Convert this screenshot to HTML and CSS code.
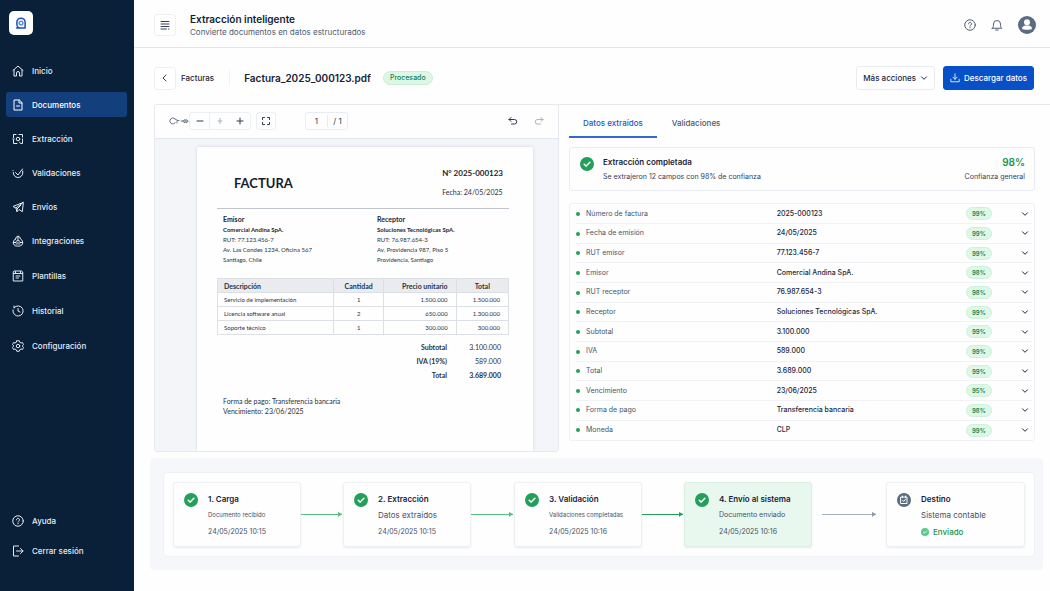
FILE: index.html
```html
<!DOCTYPE html>
<html lang="es">
<head>
<meta charset="utf-8">
<meta name="viewport" content="width=device-width, initial-scale=1">
<title>Extracción inteligente</title>
<link rel="stylesheet" href="styles.css">
</head>
<body>
<svg class="sprite" aria-hidden="true">
  <symbol id="chevron" viewBox="0 0 8 8"><path d="M1.5 2.8 4 5.3l2.5-2.5"/></symbol>
  <symbol id="help" viewBox="0 0 24 24"><circle cx="12" cy="12" r="10.5"/><path d="M9 9.6a3 3 0 1 1 4.6 2.5c-1 .7-1.6 1.1-1.6 2.2M12 17v.6"/></symbol>
  <symbol id="done" viewBox="0 0 14 14"><circle cx="7" cy="7" r="7"/><path d="m4.2 7.2 2 1.9 3.7-3.9"/></symbol>
</svg>
<div class="app">
  <aside class="sidebar">
    <a class="logo" href="#" aria-label="Inicio">
      <svg viewBox="0 0 24 24"><path class="logo-ring" d="M6 18.500h11.500V11a5.500 5.500 0 0 0-11 0v3a4.500 4.500 0 0 0 4.500 4.500"/><circle class="logo-dot" cx="12" cy="12" r="2.500"/></svg>
    </a>
    <nav class="nav" aria-label="Principal">
      <a class="nav-item" href="#"><svg class="icon" viewBox="0 0 24 24"><path d="M2 11 12 2l10 9M4 9.500V22h5v-6a3 3 0 0 1 6 0v6h5V9.500"/></svg>Inicio</a>
      <a class="nav-item active" href="#" aria-current="page"><svg class="icon" viewBox="0 0 24 24"><path d="M14 2H4v20h16V8zM14 2v6h6M9 14h6"/></svg>Documentos</a>
      <a class="nav-item" href="#"><svg class="icon" viewBox="0 0 24 24"><path d="M3 9V3h5M14 3h7v5M3 14v7h7M1.500 12h3M21 12v3M15 18l2 3h4v-4"/><circle cx="12" cy="12" r="3.500"/></svg>Extracción</a>
      <a class="nav-item" href="#"><svg class="icon" viewBox="0 0 24 24"><path d="M2.500 11a9.500 9.500 0 0 0 19 1V8M7 11l5 5L21 4M2 7v.5"/></svg>Validaciones</a>
      <a class="nav-item" href="#"><svg class="icon" viewBox="0 0 24 24"><path d="M22 3 2 11l6 3 2 7 4-4 6 4zM22 3 8 14M10 21v-5l8-8"/></svg>Envíos</a>
    </nav>
    <nav class="nav nav-tools" aria-label="Herramientas">
      <a class="nav-item" href="#"><svg class="icon" viewBox="0 0 24 24"><path d="M7 8a5 5 0 0 1 10 0 8 8 0 0 1 4.500 7c0 4-3 7-6.500 7H9c-3.500 0-6.500-3-6.500-7A8 8 0 0 1 7 8zM12 2v7M8 13l4-3 4 3M3 15h5M16 15h5M12 14v3M8 18h2M14 18h2"/></svg>Integraciones</a>
      <a class="nav-item" href="#"><svg class="icon" viewBox="0 0 24 24"><path d="M5 2h14l2.500 2v18h-19V4zM3 7h4M17 7h4M7 3v4h10V3M8 12h8M8 16h5"/></svg>Plantillas</a>
      <a class="nav-item" href="#"><svg class="icon" viewBox="0 0 24 24"><path d="M4.500 5a10.200 10.200 0 1 1-2.500 5M4 2v4M12 7v5l4 2"/></svg>Historial</a>
      <a class="nav-item" href="#"><svg class="icon" viewBox="0 0 24 24"><path d="M9.500 1.500h5l1 3 2.500 1.500 3-.8 2 4-2 2.300v1l2 2.300-2 4-3-.8-2.500 1.500-1 3h-5l-1-3L6 18l-3 .8-2-4 2-2.300v-1L1 9.200l2-4 3 .8 2.500-1.500z"/><circle cx="12" cy="12" r="3.500"/></svg>Configuración</a>
    </nav>
    <nav class="nav nav-foot" aria-label="Cuenta">
      <a class="nav-item" href="#"><svg class="icon"><use href="#help"/></svg>Ayuda</a>
      <a class="nav-item" href="#"><svg class="icon" viewBox="0 0 24 24"><path d="M13 2H3v20h10M9 12h13M17 7l5 5-5 5"/></svg>Cerrar sesión</a>
    </nav>
  </aside>

  <div class="main">
    <header class="topbar">
      <button class="square" aria-label="Menú"><svg class="icon" viewBox="0 0 24 24"><path d="M4 5h16M4 10h16M4 15h16M4 20h11M19 20h1"/></svg></button>
      <div class="titles">
        <h1>Extracción inteligente</h1>
        <p>Convierte documentos en datos estructurados</p>
      </div>
      <div class="top-actions">
        <button class="plain" aria-label="Ayuda"><svg class="icon"><use href="#help"/></svg></button>
        <button class="plain" aria-label="Notificaciones"><svg class="icon" viewBox="0 0 24 24"><path d="M2.500 18.500h19C19 16 19 14 19 10a7 7 0 0 0-14 0c0 4 0 6-2.500 8.500zM9.500 22h5"/></svg></button>
        <button class="plain" aria-label="Perfil"><svg class="avatar" viewBox="0 0 18 18"><circle class="avatar-bg" cx="9" cy="9" r="9"/><circle cx="9" cy="6.300" r="3"/><path d="M4 13c0-2.300 1.500-3.500 3.500-3.500h3c2 0 3.500 1.200 3.500 3.500-1.500 1-8.500 1-10 0z"/></svg></button>
      </div>
    </header>

    <div class="docbar">
      <button class="square back" aria-label="Volver"><svg class="icon" viewBox="0 0 24 24"><path d="m14 6-6 6 6 6"/></svg></button>
      <a class="crumb" href="#">Facturas</a>
      <h2>Factura_2025_000123.pdf</h2>
      <span class="status">Procesado</span>
      <div class="doc-actions">
        <button class="btn">Más acciones <svg class="chev"><use href="#chevron"/></svg></button>
        <button class="btn primary"><svg class="icon" viewBox="0 0 24 24"><path d="M12 2v13M7 10l5 5 5-5M2 15v6h20v-6"/></svg>Descargar datos</button>
      </div>
    </div>

    <div class="workspace">
      <section class="viewer" aria-label="Vista previa">
        <div class="tools">
          <svg class="zoom-mark" viewBox="0 0 20 8"><path d="M6 1.800a3 3 0 1 0 .2 4M6 2l2 1M8 6V3.500h2M12 4h2M14 4l2-1.500v3zM19 4l-2-1.500v3z"/></svg>
          <div class="tool-group">
            <button class="tool" aria-label="Alejar"><svg class="icon" viewBox="0 0 12 12"><path d="M3 6h6"/></svg></button>
            <button class="tool faint" aria-label="Tamaño real"><svg class="icon" viewBox="0 0 12 12"><path d="M4 6h4M6 3.500v5"/></svg></button>
            <button class="tool" aria-label="Acercar"><svg class="icon" viewBox="0 0 12 12"><path d="M3 6h6M6 3v6"/></svg></button>
          </div>
          <div class="tool-group"><button class="tool" aria-label="Pantalla completa"><svg class="icon" viewBox="0 0 12 12"><path d="M2.500 4.500v-2h2M7.500 2.500h2v2M9.500 7.500v2h-2M4.500 9.500h-2v-2"/></svg></button></div>
          <label class="pager"><input type="text" value="1" aria-label="Página"><span>/ 1</span></label>
          <div class="history">
            <button class="plain" aria-label="Deshacer"><svg class="icon" viewBox="0 0 12 12"><path d="M4 2.500 2 4.500l2 2M2 4.500h5.500a2.200 2.200 0 0 1 0 4.500H4.500"/></svg></button>
            <button class="plain faint" aria-label="Rehacer"><svg class="icon" viewBox="0 0 12 12"><path d="m8 2.500 2 2-2 2M10 4.500H4.500a2.200 2.200 0 0 0 0 4.500h3"/></svg></button>
          </div>
        </div>
        <div class="canvas">
          <article class="paper">
            <header class="inv-head">
              <h3>FACTURA</h3>
              <div><strong>N° 2025-000123</strong><span>Fecha: 24/05/2025</span></div>
            </header>
            <div class="parties">
              <p><strong>Emisor</strong><br><b>Comercial Andina SpA.</b><br>RUT: 77.123.456-7<br>Av. Las Condes 1234, Oficina 567<br>Santiago, Chile</p>
              <p><strong>Receptor</strong><br><b>Soluciones Tecnológicas SpA.</b><br>RUT: 76.987.654-3<br>Av. Providencia 987, Piso 5<br>Providencia, Santiago</p>
            </div>
            <table class="lines">
              <colgroup><col class="c-desc"><col class="c-qty"><col class="c-price"><col class="c-total"></colgroup>
              <thead><tr><th>Descripción</th><th>Cantidad</th><th>Precio unitario</th><th>Total</th></tr></thead>
              <tbody>
                <tr><td>Servicio de implementación</td><td>1</td><td>1.500.000</td><td>1.500.000</td></tr>
                <tr><td>Licencia software anual</td><td>2</td><td>650.000</td><td>1.300.000</td></tr>
                <tr><td>Soporte técnico</td><td>1</td><td>300.000</td><td>300.000</td></tr>
              </tbody>
            </table>
            <dl class="totals">
              <dt>Subtotal</dt><dd>3.100.000</dd>
              <dt>IVA (19%)</dt><dd>589.000</dd>
              <dt>Total</dt><dd class="grand">3.689.000</dd>
            </dl>
            <p class="terms">Forma de pago: Transferencia bancaria<br>Vencimiento: 23/06/2025</p>
          </article>
        </div>
      </section>

      <section class="data" aria-label="Datos">
        <div class="tabs" role="tablist">
          <button class="tab selected" role="tab" aria-selected="true">Datos extraídos</button>
          <button class="tab" role="tab" aria-selected="false">Validaciones</button>
        </div>
        <div class="summary">
          <svg class="done"><use href="#done"/></svg>
          <div class="summary-text"><h3>Extracción completada</h3><p>Se extrajeron 12 campos con 98% de confianza</p></div>
          <div class="score"><strong>98%</strong><span>Confianza general</span></div>
        </div>
        <div class="fields">
          <table>
            <tbody>
              <tr><th scope="row">Número de factura</th><td>2025-000123</td><td class="conf"><span>99%</span></td><td class="more"><button class="plain" aria-label="Ver Número de factura"><svg class="chev"><use href="#chevron"/></svg></button></td></tr>
              <tr><th scope="row">Fecha de emisión</th><td>24/05/2025</td><td class="conf"><span>99%</span></td><td class="more"><button class="plain" aria-label="Ver Fecha de emisión"><svg class="chev"><use href="#chevron"/></svg></button></td></tr>
              <tr><th scope="row">RUT emisor</th><td>77.123.456-7</td><td class="conf"><span>99%</span></td><td class="more"><button class="plain" aria-label="Ver RUT emisor"><svg class="chev"><use href="#chevron"/></svg></button></td></tr>
              <tr><th scope="row">Emisor</th><td>Comercial Andina SpA.</td><td class="conf"><span>98%</span></td><td class="more"><button class="plain" aria-label="Ver Emisor"><svg class="chev"><use href="#chevron"/></svg></button></td></tr>
              <tr><th scope="row">RUT receptor</th><td>76.987.654-3</td><td class="conf"><span>98%</span></td><td class="more"><button class="plain" aria-label="Ver RUT receptor"><svg class="chev"><use href="#chevron"/></svg></button></td></tr>
              <tr><th scope="row">Receptor</th><td>Soluciones Tecnológicas SpA.</td><td class="conf"><span>99%</span></td><td class="more"><button class="plain" aria-label="Ver Receptor"><svg class="chev"><use href="#chevron"/></svg></button></td></tr>
              <tr><th scope="row">Subtotal</th><td>3.100.000</td><td class="conf"><span>99%</span></td><td class="more"><button class="plain" aria-label="Ver Subtotal"><svg class="chev"><use href="#chevron"/></svg></button></td></tr>
              <tr><th scope="row">IVA</th><td>589.000</td><td class="conf"><span>99%</span></td><td class="more"><button class="plain" aria-label="Ver IVA"><svg class="chev"><use href="#chevron"/></svg></button></td></tr>
              <tr><th scope="row">Total</th><td>3.689.000</td><td class="conf"><span>99%</span></td><td class="more"><button class="plain" aria-label="Ver Total"><svg class="chev"><use href="#chevron"/></svg></button></td></tr>
              <tr><th scope="row">Vencimiento</th><td>23/06/2025</td><td class="conf"><span>95%</span></td><td class="more"><button class="plain" aria-label="Ver Vencimiento"><svg class="chev"><use href="#chevron"/></svg></button></td></tr>
              <tr><th scope="row">Forma de pago</th><td>Transferencia bancaria</td><td class="conf"><span>98%</span></td><td class="more"><button class="plain" aria-label="Ver Forma de pago"><svg class="chev"><use href="#chevron"/></svg></button></td></tr>
              <tr><th scope="row">Moneda</th><td>CLP</td><td class="conf"><span>99%</span></td><td class="more"><button class="plain" aria-label="Ver Moneda"><svg class="chev"><use href="#chevron"/></svg></button></td></tr>
            </tbody>
          </table>
        </div>
      </section>
    </div>

    <section class="flow" aria-label="Progreso">
      <div class="steps">
        <div class="step"><svg class="done"><use href="#done"/></svg><div><h3>1. Carga</h3><p class="small">Documento recibido</p><time>24/05/2025 10:15</time></div></div>
        <div class="arrow"></div>
        <div class="step"><svg class="done"><use href="#done"/></svg><div><h3>2. Extracción</h3><p>Datos extraídos</p><time>24/05/2025 10:15</time></div></div>
        <div class="arrow"></div>
        <div class="step"><svg class="done"><use href="#done"/></svg><div><h3>3. Validación</h3><p class="small">Validaciones completadas</p><time>24/05/2025 10:16</time></div></div>
        <div class="arrow strong"></div>
        <div class="step current"><svg class="done"><use href="#done"/></svg><div><h3>4. Envío al sistema</h3><p class="medium">Documento enviado</p><time>24/05/2025 10:16</time></div></div>
        <div class="arrow muted"></div>
        <div class="step"><svg class="target" viewBox="0 0 14 14"><circle cx="7" cy="7" r="7"/><path d="M4 4h6v6.500H4zM5.500 3v1.500M8.500 3v1.500M5.500 7.200l1.200 1.300 2-2.500"/></svg><div><h3>Destino</h3><p>Sistema contable</p><span class="sent"><svg class="done"><use href="#done"/></svg>Enviado</span></div></div>
      </div>
    </section>
  </div>
</div>
</body>
</html>
```
FILE: styles.css
```css
* { box-sizing: border-box; }
body {
  margin: 0;
  font-family: Inter, "Liberation Sans", sans-serif;
  font-size: 8px;
  line-height: 12px;
  color: #1b2740;
  background: #fefefe;
}
h1, h2, h3, p, dl, dd { margin: 0; }
a { color: inherit; text-decoration: none; }
button, input { font: inherit; color: inherit; }
button { cursor: pointer; padding: 0; }
svg { flex: none; fill: none; stroke: currentColor; stroke-linecap: round; stroke-linejoin: round; }
.sprite { position: absolute; width: 0; height: 0; }
.icon { width: 12px; height: 12px; stroke-width: 2; }
.chev { width: 8px; height: 8px; stroke-width: 1; display: block; }
.plain { display: flex; align-items: center; justify-content: center; background: none; border: 0; }

.app { display: grid; grid-template-columns: 134px minmax(0, 1fr); min-height: 100vh; }

/* Sidebar */
.sidebar {
  display: flex;
  flex-direction: column;
  padding: 11px 7px 28px 6px;
  color: #e3ebf5;
  background: #0a1f38;
}
.logo {
  display: grid;
  place-items: center;
  width: 24px;
  height: 24px;
  margin-left: 3px;
  border-radius: 5px;
  background: #fcfdff;
}
.logo svg { width: 18px; height: 18px; }
.logo-ring { stroke: #1c50b4; stroke-width: 2; }
.logo-dot { stroke: #5f8fe0; stroke-width: 2; }
.nav { display: flex; flex-direction: column; gap: 9px; margin-top: 23px; }
.nav-tools { gap: 10px; margin-top: 9px; }
.nav-foot { gap: 5px; margin-top: auto; }
.nav-item {
  display: flex;
  align-items: center;
  gap: 8px;
  height: 25px;
  padding: 0 6px;
  border-radius: 3px;
  font-weight: 500;
}
.nav-item.active { background: #133f7c; color: #fff; }

/* Top bar */
.main { display: flex; flex-direction: column; min-width: 0; }
.topbar {
  display: flex;
  align-items: center;
  height: 48px;
  padding: 2px 14px 0 20px;
  border-bottom: 1px solid #dfe6ef;
}
.square {
  display: grid;
  place-items: center;
  width: 22px;
  height: 22px;
  border: 1px solid #edf0f4;
  border-radius: 3px;
  background: #fff;
  color: #35435a;
}
.titles { margin-left: 14px; }
h1 { font-size: 10px; line-height: 14px; font-weight: 600; color: #131d33; }
.titles p { color: #4c5b72; }
.top-actions { display: flex; align-items: center; gap: 15px; margin-left: auto; color: #4f5d73; }
.avatar { width: 18px; height: 18px; stroke: none; fill: #fff; }
.avatar-bg { fill: #5b6b82; }

/* Document bar */
.docbar { display: flex; align-items: center; height: 56px; padding: 4px 16px 0 20px; }
.square.back { height: 23px; }
.crumb { margin-left: 5px; padding-right: 15px; line-height: 16px; font-weight: 500; border-right: 1px solid #f0f2f5; }
h2 { margin-left: 14px; font-size: 10px; line-height: 14px; font-weight: 600; color: #17223a; }
.status {
  margin-left: 12px;
  padding: 0 6px;
  border: 1px solid #c9efd7;
  border-radius: 7px;
  background: #dcf7e6;
  color: #17804a;
  font-size: 7px;
  font-weight: 500;
}
.doc-actions { display: flex; gap: 8px; margin-left: auto; }
.btn {
  display: flex;
  align-items: center;
  gap: 4px;
  height: 24px;
  padding: 0 6px;
  border: 1px solid #e8ecf1;
  border-radius: 3px;
  background: #fff;
  font-weight: 500;
}
.btn .icon { width: 10px; height: 10px; }
.btn.primary { border-color: #0750c8; background: #0750c8; color: #fff; }

/* Workspace */
.workspace {
  display: grid;
  grid-template-columns: minmax(0, 405fr) minmax(0, 491fr);
  margin-left: 20px;
}
.viewer { display: flex; flex-direction: column; border: 1px solid #e6eaf0; border-radius: 3px 0 3px 3px; overflow: hidden; }
.tools { display: flex; align-items: center; height: 34px; padding: 0 13px 1px 14px; border-bottom: 1px solid #e2e7ee; color: #2c3950; }
.zoom-mark { width: 20px; height: 8px; stroke: #6c7889; }
.tool-group { display: flex; margin-right: 5px; border: 1px solid #eceff3; border-radius: 3px; }
.tool { display: grid; place-items: center; width: 20px; height: 16px; border: 0; background: none; }
.tool:first-child:not(:last-child) { border-right: 1px solid #eceff3; }
.tool:only-child { width: 18px; }
.tools .icon { stroke-width: 1; }
.faint { color: #a9b2bf; }
.pager { display: flex; align-items: center; width: 43px; height: 18px; margin-left: 24px; border: 1px solid #e8ecf1; border-radius: 3px; }
.pager input { width: 22px; padding: 0; border: 0; border-right: 1px solid #e8ecf1; background: none; text-align: center; }
.pager span { flex: 1; text-align: center; }
.history { display: flex; gap: 14px; margin-left: auto; }
.canvas { flex: 1; padding: 8px 25px 0 42px; background: #f3f5f9; }

/* Invoice */
.paper {
  height: 100%;
  padding: 20px 24px 35px 20px;
  background: #fefefe;
  box-shadow: 0 0 3px #cfd5df;
  font-family: Lato, "Liberation Sans", sans-serif;
  font-size: 7px;
  line-height: 10px;
  color: #2a3344;
}
.paper strong, .paper b { font-weight: 700; color: #1c2536; }
.inv-head { display: flex; justify-content: space-between; align-items: center; padding: 0 6px 9px 17px; border-bottom: 1px solid #bfc4cb; }
.inv-head h3 { font-size: 13px; line-height: 18px; font-weight: 700; color: #151c2b; }
.inv-head div { display: grid; gap: 6px; }
.inv-head strong { font-size: 8px; line-height: 12px; }
.inv-head span { line-height: 14px; }
.parties { display: grid; grid-template-columns: 154fr 132fr; padding: 5px 0 13px 6px; font-size: 6px; }
.parties strong { font-size: 7px; }
.lines { width: 100%; table-layout: fixed; border-collapse: collapse; font-size: 6px; }
.c-desc { width: 40%; }
.c-qty { width: 17%; }
.c-price { width: 25%; }
.c-total { width: 18%; }
.lines th, .lines td { height: 14px; padding: 0 8px; border: 1px solid #dcdfe4; text-align: right; }
.lines th { background: #e9ebee; font-size: 7px; font-weight: 700; }
.lines th:first-child, .lines td:first-child { padding-left: 6px; text-align: left; }
.lines th:nth-child(2), .lines td:nth-child(2), .lines th:last-child { text-align: center; }
.totals { display: grid; grid-template-columns: 1fr 54px; padding: 5px 8px 0 0; line-height: 14px; text-align: right; }
.totals dt, .totals .grand { font-weight: 700; }
.terms { padding: 14px 0 0 6px; }

/* Extracted data */
.data { display: flex; flex-direction: column; padding: 0 15px 11px 10px; border-top: 1px solid #e6eaf0; }
.tabs { display: flex; gap: 1px; height: 33px; }
.tab { padding: 4px 14px 0; border: 0; border-bottom: 2px solid transparent; background: none; font-weight: 500; color: #4c5a70; }
.tab.selected { border-bottom-color: #3568cf; color: #2258c9; }
.summary { display: flex; align-items: flex-start; margin-top: 9px; padding: 7px 9px 7px 10px; border: 1px solid #e8ecf1; border-radius: 3px; }
.done { width: 14px; height: 14px; fill: #22a05a; stroke: #22a05a; stroke-width: 1; }
.summary .done { margin-top: 2px; }
.summary-text { margin-left: 9px; }
.summary h3 { font-size: 8px; line-height: 14px; font-weight: 600; color: #17223a; }
.summary p, .score span { display: block; margin-top: 2px; font-size: 7px; color: #33415a; }
.score { margin-left: auto; text-align: right; }
.score strong { display: block; font-size: 10px; line-height: 14px; font-weight: 600; color: #17934d; }
.fields { flex: 1; margin-top: 12px; padding: 0 2px 0 6px; border: 1px solid #eff1f4; border-radius: 3px; }
.fields table { width: 100%; height: 100%; table-layout: fixed; border-collapse: collapse; font-size: 7px; }
.fields th, .fields td { height: 19px; padding: 0; border-bottom: 1px solid #f0f2f5; text-align: left; font-weight: 500; }
.fields tr:last-child > * { border-bottom: 0; }
.fields th { width: 44%; font-weight: 400; color: #46546b; }
.fields th::before { content: ""; display: inline-block; width: 4px; height: 4px; margin-right: 6px; border-radius: 2px; background: #22a05a; vertical-align: middle; }
.fields .conf { width: 55px; font-size: 6px; font-weight: 600; }
.conf span { display: inline-block; padding: 0 5px; border: 1px solid #cdf1da; border-radius: 7px; background: #def8e7; color: #17804a; line-height: 11px; vertical-align: middle; }
.fields .more { width: 11px; }

/* Progress */
.flow { margin: 6px 7px 21px 16px; padding: 14px 8px 13px 13px; border-radius: 4px; background: #f6f7fa; }
.steps {
  display: grid;
  grid-template-columns: 128fr 42fr 128fr 43fr 128fr 42fr 128fr 74fr 139fr;
  padding: 9px;
  border: 1px solid #eff1f4;
  border-radius: 4px;
  background: #fefefe;
}
.step { display: flex; gap: 10px; padding: 9px 0 8px 10px; border: 1px solid #eef0f4; border-radius: 3px; box-shadow: 0 1px 2px #e8ebf0; white-space: nowrap; }
.step > svg { margin-top: 1px; }
.step h3 { font-size: 8px; line-height: 15px; font-weight: 600; color: #17223a; }
.step p { margin: 2px 0 5px; color: #44526a; }
.step .medium { font-size: 7px; }
.step .small { font-size: 6px; }
.step time { display: block; font-size: 7px; color: #44526a; }
.step.current { border-color: #d9f0e2; background: #e8f8ee; }
.arrow { position: relative; align-self: center; height: 1px; margin-right: 1px; background: #58bd85; color: #58bd85; }
.arrow::after { content: ""; position: absolute; right: 0; top: -2px; border: solid transparent; border-width: 2px 0 3px 4px; border-left-color: currentColor; }
.arrow.strong { background: #22a05a; color: #22a05a; }
.arrow.muted { margin: 0 10px; background: #a5b1bf; color: #8a97a8; }
.target { width: 14px; height: 14px; fill: #5b6b82; stroke: #fff; stroke-width: 1; }
.target circle { stroke: none; }
.sent { display: flex; align-items: center; gap: 4px; color: #17934d; font-weight: 500; }
.sent .done { width: 8px; height: 8px; fill: #5fc78c; stroke: #5fc78c; }
#done path { stroke: #fff; stroke-width: 1.500; }
#done circle { stroke: none; }
```
